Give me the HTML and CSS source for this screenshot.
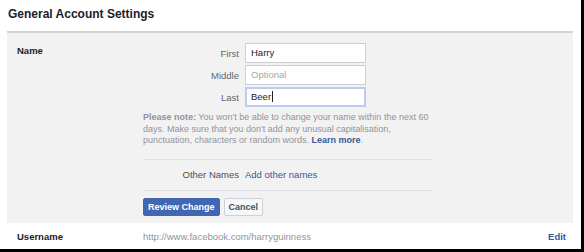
FILE: index.html
```html
<!DOCTYPE html>
<html lang="en">
<head>
    <meta charset="UTF-8">
    <meta name="viewport" content="width=device-width, initial-scale=1.0">
    <title>General Account Settings</title>
    <link rel="stylesheet" href="styles.css">
</head>
<body>
    <div class="frame">
        <h1>General Account Settings</h1>

        <!-- Name editor (open) -->
        <div class="panel">
            <div class="row-label">Name</div>
            <div class="row-body">
                <div class="fields">
                    <label class="field-label">First</label>
                    <div class="field">Harry</div>
                    <label class="field-label">Middle</label>
                    <div class="field placeholder">Optional</div>
                    <label class="field-label">Last</label>
                    <div class="field focused">Beer<span class="caret"></span></div>
                </div>

                <p class="note"><b>Please note:</b> You won't be able to change your name within the next 60 days. Make sure that you don't add any unusual capitalisation, punctuation, characters or random words. <a href="#">Learn more</a>.</p>

                <div class="fields other">
                    <span class="field-label dark">Other Names</span>
                    <a href="#" class="link">Add other names</a>
                </div>

                <div class="actions">
                    <button class="btn primary">Review Change</button>
                    <button class="btn">Cancel</button>
                </div>
            </div>
        </div>

        <!-- Username row (closed) -->
        <div class="setting">
            <div class="row-label">Username</div>
            <div class="value">http://www.facebook.com/harryguinness</div>
            <a href="#" class="edit">Edit</a>
        </div>
    </div>
</body>
</html>
```

FILE: styles.css
```css
body {
    margin: 0;
    font-family: "Liberation Sans", Arial, sans-serif;
    color: #1d2129;
    background: #fff;
}

.frame {
    width: 581px;
    height: 249px;
    border-right: 3px solid #000;
    border-bottom: 3px solid #000;
    overflow: hidden;
}

h1 {
    margin: 0;
    padding: 7px 8px 0;
    height: 24px;
    font-size: 12px;
    font-weight: bold;
    color: #1d2129;
}

.panel {
    display: flex;
    margin: 0 8px 0 7px;
    padding: 10px 0 7px;
    background: #f2f2f2;
    border-top: 2px solid #d3d3d3;
}

.row-label {
    width: 126px;
    padding-left: 10px;
    font-size: 9.5px;
    font-weight: bold;
    color: #1d2129;
}

.panel .row-label {
    padding-top: 2px;
}

.row-body {
    width: 289px;
}

.fields {
    display: grid;
    grid-template-columns: 96px 121px;
    column-gap: 6px;
    row-gap: 2px;
    align-items: center;
}

.field-label {
    text-align: right;
    font-size: 9.5px;
    color: #606770;
}

.field-label.dark {
    color: #4b4f56;
}

.field {
    box-sizing: border-box;
    height: 20px;
    padding: 0 5px;
    line-height: 18px;
    font-size: 9.5px;
    color: #1d2129;
    background: #fff;
    border: 1px solid #ccd0d5;
}

.field.placeholder {
    color: #a4a7ab;
}

.field.focused {
    border: 2px solid #b9cdf0;
    line-height: 16px;
    padding-left: 4px;
}

.caret {
    display: inline-block;
    width: 1px;
    height: 11px;
    margin-left: 1px;
    vertical-align: -2px;
    background: #1d2129;
}

.note {
    margin: 5px 0 0;
    padding-bottom: 12px;
    font-size: 9px;
    line-height: 11.5px;
    color: #90949c;
    border-bottom: 1px solid #dddfe2;
}

.note b {
    font-weight: bold;
}

.note a {
    color: #365899;
    font-weight: bold;
    text-decoration: none;
}

.other {
    height: 30px;
    border-bottom: 1px solid #dddfe2;
}

.link {
    font-size: 9.5px;
    color: #365899;
    text-decoration: none;
}

.actions {
    display: flex;
    gap: 4px;
    margin-top: 7px;
}

.btn {
    height: 18px;
    padding: 0 4px;
    font-family: inherit;
    font-size: 9px;
    font-weight: bold;
    color: #4b4f56;
    background: #f6f7f9;
    border: 1px solid #ced0d4;
    border-radius: 2px;
}

.btn.primary {
    color: #fff;
    background: #4267b2;
    border-color: #4267b2;
}

.setting {
    display: flex;
    align-items: center;
    height: 28px;
    margin: 0 8px 0 7px;
}

.value {
    flex: 1;
    font-size: 9.5px;
    color: #90949c;
}

.edit {
    margin-right: 7px;
    font-size: 9.5px;
    font-weight: bold;
    color: #365899;
    text-decoration: none;
}
```
